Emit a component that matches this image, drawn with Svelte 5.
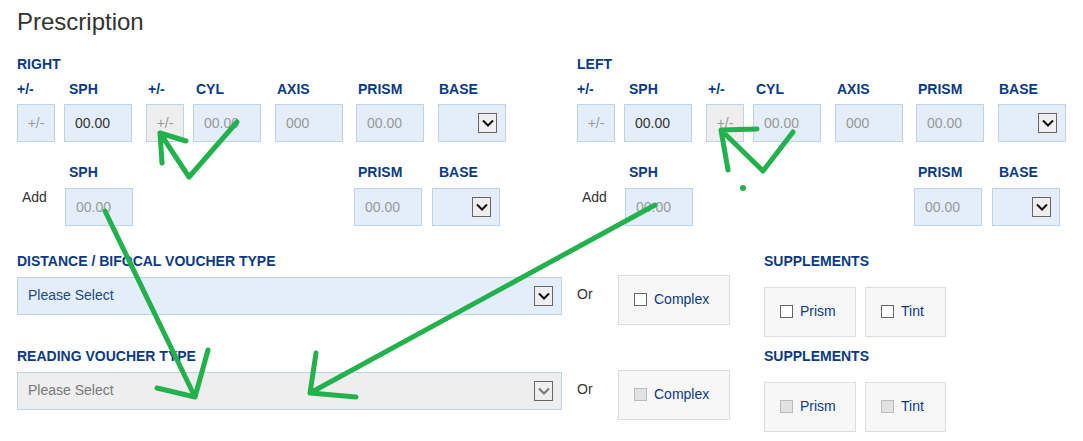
<script lang="ts">
  const eyes = ['RIGHT', 'LEFT'];
  const vouchers = [
    { title: 'DISTANCE / BIFOCAL VOUCHER TYPE', disabled: false },
    { title: 'READING VOUCHER TYPE', disabled: true }
  ];
</script>

{#snippet chevron(disabled)}
  <span class="arrow" class:muted={disabled}>
    <svg width="12" height="8" viewBox="0 0 12 8"><path d="M1 1.5 L6 6.5 L11 1.5" fill="none" stroke={disabled ? '#777' : '#111'} stroke-width="2" /></svg>
  </span>
{/snippet}

<main class="page">
  <h2>Prescription</h2>

  <div class="eyes">
    {#each eyes as eye}
      <section class="eye">
        <h4>{eye}</h4>
        <div class="row">
          <div class="field sign"><label>+/-</label><input class="box" placeholder="+/-" /></div>
          <div class="field sph"><label>SPH</label><input class="box" value="00.00" /></div>
          <div class="field sign cyl-sign"><label>+/-</label><input class="box off" placeholder="+/-" /></div>
          <div class="field cyl"><label>CYL</label><input class="box" placeholder="00.00" /></div>
          <div class="field axis"><label>AXIS</label><input class="box" placeholder="000" /></div>
          <div class="field prism"><label>PRISM</label><input class="box" placeholder="00.00" /></div>
          <div class="field base"><label>BASE</label><div class="box select">{@render chevron(false)}</div></div>
        </div>
        <div class="row second">
          <span class="add">Add</span>
          <div class="field sph2"><label>SPH</label><input class="box" placeholder="00.00" /></div>
          <div class="field add-prism"><label>PRISM</label><input class="box" placeholder="00.00" /></div>
          <div class="field add-base"><label>BASE</label><div class="box select">{@render chevron(false)}</div></div>
        </div>
      </section>
    {/each}
  </div>

  {#each vouchers as v}
    <section class="voucher" class:disabled={v.disabled}>
      <div class="pick">
        <h4>{v.title}</h4>
        <div class="box wide"><span>Please Select</span> {@render chevron(v.disabled)}</div>
      </div>
      <span class="or">Or</span>
      <label class="tick complex"><input type="checkbox" disabled={v.disabled} /> Complex</label>
      <div class="supp">
        <h4>SUPPLEMENTS</h4>
        <div class="ticks">
          <label class="tick prism-tick"><input type="checkbox" disabled={v.disabled} /> Prism</label>
          <label class="tick tint-tick"><input type="checkbox" disabled={v.disabled} /> Tint</label>
        </div>
      </div>
    </section>
  {/each}

  <!-- hand drawn annotations on top of the form -->
  <svg class="marks" width="1083" height="441" viewBox="0 0 1083 441">
    <g fill="none" stroke="#22b14c" stroke-width="5" stroke-linecap="round" stroke-linejoin="round">
      <path d="M237 122 L189 177 L160 133 M162 163 L160 133 L186 141" />
      <path d="M793 132 L763 171 L721 130 L728 170 M721 130 L757 129" />
      <path d="M105 211 L195 397 L208 350 M157 388 L195 397" />
      <path d="M655 205 L310 393 L316 353 M310 393 L356 397" />
    </g>
    <circle cx="743" cy="188" r="3" fill="#22b14c" />
  </svg>
</main>

<style>
  :global(body) {
    background: #fff;
  }

  .page {
    position: relative;
    width: 1083px;
    height: 441px;
    overflow: hidden;
    padding: 8px 0 0 17px;
    box-sizing: border-box;
    font-family: "Liberation Sans", Arial, sans-serif;
    font-size: 14px;
    color: #333;
  }

  h2 {
    margin: 0 0 21px;
    font-size: 24px;
    line-height: 28px;
    font-weight: 400;
  }

  h4, label {
    margin: 0;
    font-size: 14px;
    line-height: 14px;
    padding-bottom: 2px;
    font-weight: 700;
    color: #0b3a82;
  }

  .eyes {
    display: flex;
  }

  .eye {
    flex: none;
    width: 560px;
  }

  .eye h4 {
    margin-bottom: 9px;
  }

  .row {
    display: flex;
  }

  .second {
    margin-top: 23px;
  }

  .field {
    display: flex;
    flex-direction: column;
    gap: 6px;
  }

  .second .field {
    gap: 7px;
  }

  .field label {
    display: block;
    height: 14px;
  }

  .sph label,
  .sph2 label {
    padding-left: 5px;
  }

  .sph2 label {
    padding-left: 4px;
  }

  .cyl-sign label,
  .axis label,
  .prism label {
    padding-left: 2px;
  }

  .cyl label {
    padding-left: 3px;
  }

  .base label {
    padding-left: 1px;
  }

  .add-prism label {
    padding-left: 4px;
  }

  .add-base label {
    padding-left: 7px;
  }

  .box {
    box-sizing: border-box;
    width: 68px;
    height: 38px;
    padding: 0 10px;
    border: 1px solid #bcd3ea;
    background: #e3eefa;
    border-radius: 0;
    font: 14px "Liberation Sans", Arial, sans-serif;
    color: #333;
    outline: none;
  }

  .box::placeholder {
    color: #999;
    opacity: 1;
  }

  .sign .box {
    width: 38px;
    padding: 0;
    text-align: center;
  }

  .sph,
  .cyl {
    margin-left: 9px;
  }

  .cyl-sign,
  .axis,
  .base {
    margin-left: 14px;
  }

  .prism {
    margin-left: 13px;
  }

  .box.off {
    background: #eee;
  }

  .select {
    display: flex;
    align-items: center;
    justify-content: flex-end;
    padding: 0 8px;
  }

  .arrow {
    display: flex;
    align-items: center;
    justify-content: center;
    width: 19px;
    height: 20px;
    box-sizing: border-box;
    border: 1px solid #666;
    background: #efefef;
  }

  .add {
    width: 48px;
    padding: 24px 0 0 5px;
    box-sizing: border-box;
    line-height: 16px;
  }

  .add-prism {
    margin-left: 221px;
  }

  .add-base {
    margin-left: 10px;
  }

  .voucher {
    display: flex;
    align-items: flex-start;
    margin-top: 28px;
  }

  .voucher + .voucher {
    margin-top: 12px;
  }

  .pick {
    width: 545px;
  }

  .pick h4 {
    margin-bottom: 7px;
  }

  .wide {
    display: flex;
    align-items: center;
    justify-content: space-between;
    width: 100%;
    padding: 0 8px 0 10px;
    color: #1c4a85;
  }

  .wide span:first-child {
    margin-top: -2px;
  }

  .disabled .wide {
    background: #eee;
    color: #777;
  }

  .or {
    margin: 32px 0 0 15px;
    width: 41px;
    line-height: 16px;
  }

  .tick {
    display: flex;
    align-items: center;
    box-sizing: border-box;
    height: 50px;
    padding-bottom: 2px;
    border: 1px solid #ddd;
    background: #f7f7f7;
    font-weight: 400;
    font-size: 14px;
  }

  .tick input {
    appearance: none;
    width: 13px;
    height: 13px;
    margin: 0 7px 0 0;
    border: 1px solid #666;
    background: #fff;
  }

  .tick input:disabled {
    border-color: #bbb;
    background: #e2e2e2;
  }

  .complex {
    width: 112px;
    margin-top: 21px;
    padding-left: 15px;
  }

  .supp {
    margin-left: 34px;
  }

  .supp h4 {
    margin-bottom: 17px;
  }

  .ticks {
    display: flex;
    gap: 9px;
  }

  .prism-tick {
    width: 92px;
    padding-left: 15px;
  }

  .tint-tick {
    width: 81px;
    padding-left: 15px;
  }

  .marks {
    position: absolute;
    left: 0;
    top: 0;
    pointer-events: none;
  }
</style>
